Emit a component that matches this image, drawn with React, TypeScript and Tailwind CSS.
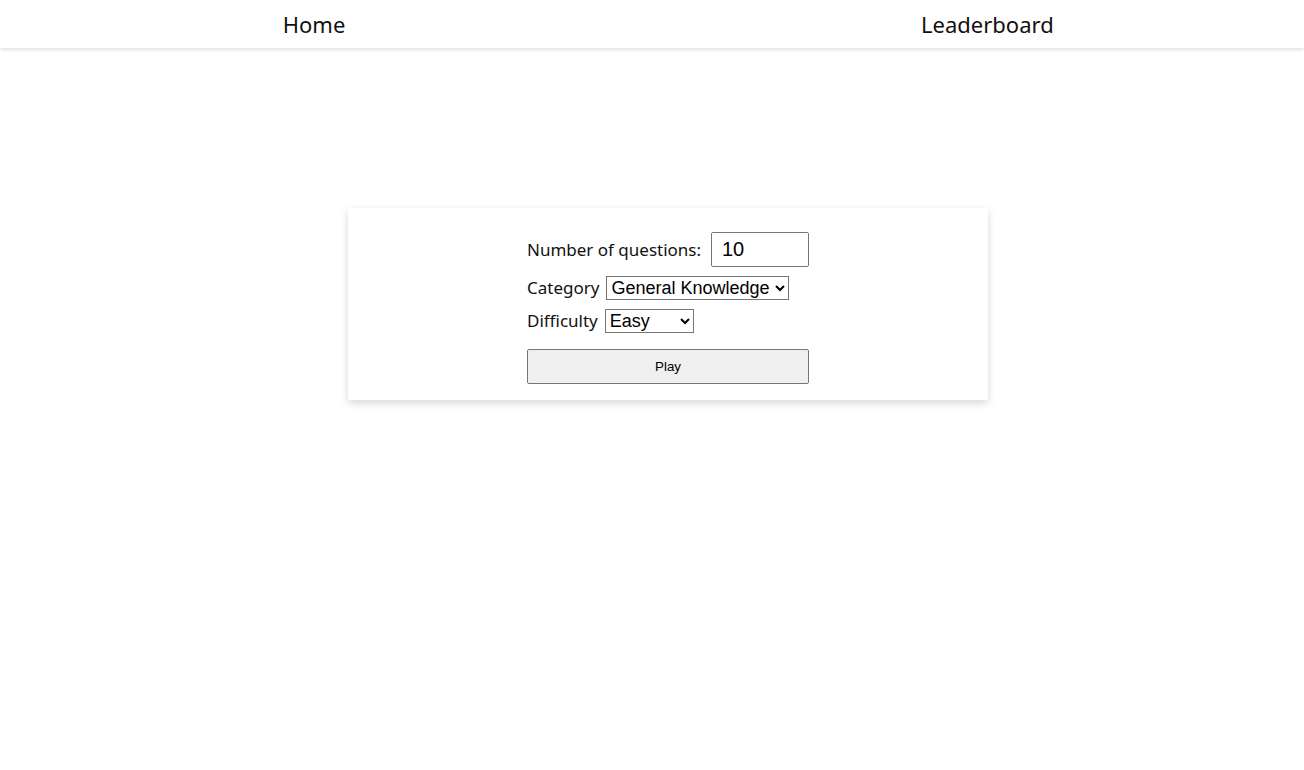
import React, { useState } from "react";

const Navbar = () => {
  return (
    <nav className="flex h-12 items-center bg-white shadow-[0_2px_4px_rgba(0,0,0,0.12)] font-['Noto_Sans',sans-serif] text-[22px] text-[#111]">
      <a href="#" className="ml-[282px] w-[64px] text-center">
        Home
      </a>
      <a href="#" className="ml-[575px] text-center">
        Leaderboard
      </a>
    </nav>
  );
};

const App = () => {
  const [count, setCount] = useState("10");
  const [category, setCategory] = useState("9");
  const [difficulty, setDifficulty] = useState("easy");

  return (
    <div className="min-h-screen bg-white">
      <Navbar />

      <main className="flex justify-center pt-[160px] pl-8">
        <div className="flex w-[640px] justify-center bg-white pt-6 pb-4 shadow-[0_3px_8px_rgba(0,0,0,0.16)]">
          <form
            className="flex w-[282px] flex-col"
            onSubmit={(e) => e.preventDefault()}
          >
            <div className="flex h-[35px] items-center">
              <label className="font-['Noto_Sans',sans-serif] text-[17px] leading-6 text-[#111]">
                Number of questions:
              </label>
              <input
                type="number"
                value={count}
                onChange={(e) => setCount(e.target.value)}
                className="ml-auto h-[35px] w-[98px] rounded-[2px] border border-[#767676] pl-[10px] font-['Liberation_Sans',Arial,sans-serif] text-[20px] text-black [appearance:textfield]"
              />
            </div>

            <div className="mt-[9px] flex h-6 items-center">
              <label className="font-['Noto_Sans',sans-serif] text-[17px] leading-6 text-[#111]">
                Category
              </label>
              <select
                value={category}
                onChange={(e) => setCategory(e.target.value)}
                className="ml-[7px] h-6 w-[183px] border border-[#767676] font-['Liberation_Sans',Arial,sans-serif] text-[18px] leading-5 text-black"
              >
                <option value="9">General Knowledge</option>
                <option value="17">Science &amp; Nature</option>
                <option value="21">Sports</option>
                <option value="23">History</option>
              </select>
            </div>

            <div className="mt-[9px] flex h-6 items-center">
              <label className="font-['Noto_Sans',sans-serif] text-[17px] leading-6 text-[#111]">
                Difficulty
              </label>
              <select
                value={difficulty}
                onChange={(e) => setDifficulty(e.target.value)}
                className="ml-[7px] h-6 w-[89px] border border-[#767676] font-['Liberation_Sans',Arial,sans-serif] text-[18px] leading-5 text-black"
              >
                <option value="easy">Easy</option>
                <option value="medium">Medium</option>
                <option value="hard">Hard</option>
              </select>
            </div>

            <button
              type="submit"
              className="mt-4 h-[35px] w-full rounded-[2px] border border-[#767676] bg-[#efefef] font-['Liberation_Sans',Arial,sans-serif] text-[13.33px] text-black"
            >
              Play
            </button>
          </form>
        </div>
      </main>
    </div>
  );
};

export default App;
